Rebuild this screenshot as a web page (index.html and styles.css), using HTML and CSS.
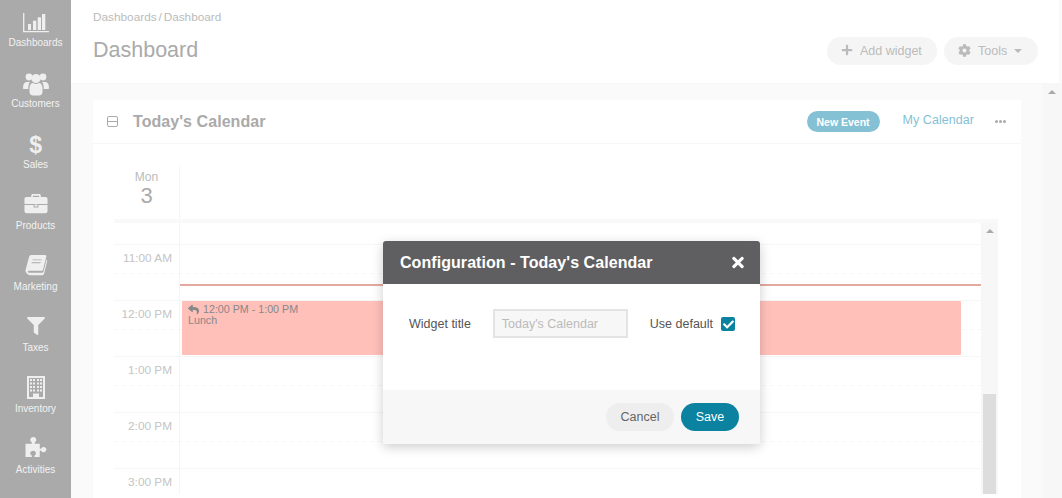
FILE: index.html
```html
<!DOCTYPE html>
<html lang="en">
<head>
<meta charset="utf-8">
<title>Dashboard</title>
<link rel="stylesheet" href="styles.css">
</head>
<body>
<nav class="sidebar">
  <a class="nav-item"><svg class="nav-icon" viewBox="0 -1 26 24"><path class="line" d="M.7 0v18.700H26"/><rect x="5" y="11" width="3" height="6"/><rect x="10" y="7.700" width="3.300" height="9.300"/><rect x="14.700" y="4.300" width="3.300" height="12.700"/><rect x="19" y="1" width="3.300" height="16"/></svg><span>Dashboards</span></a>
  <a class="nav-item"><svg class="nav-icon" viewBox="0 1 26 24"><circle cx="6" cy="5" r="3.400"/><circle cx="20" cy="5" r="3.400"/><circle cx="13" cy="6.500" r="4.600"/><path d="M0 16c0-4 1.500-6 3.500-6h3.300c-1 1.600-1.500 3.500-1.500 6v1H1c-.6 0-1-.4-1-1zM26 16c0-4-1.500-6-3.500-6h-3.300c1 1.600 1.500 3.500 1.500 6v1H25c.6 0 1-.4 1-1z"/><path d="M6.500 16.500c0-3.500 1.500-5.500 3.500-5.500 1.800 1.200 4.200 1.200 6 0 2 0 3.500 2 3.500 5.500v3.500c0 2-1.500 3.500-3.500 3.500h-6c-2 0-3.500-1.500-3.500-3.500z"/></svg><span>Customers</span></a>
  <a class="nav-item"><span class="dollar">$</span><span>Sales</span></a>
  <a class="nav-item"><svg class="nav-icon" viewBox="-1.500 1 27 25"><path d="M7 3V1.500C7 .7 7.700 0 8.500 0h7c.8 0 1.500.7 1.500 1.500V3h5c1.100 0 2 .9 2 2v5.500H0V5c0-1.100.9-2 2-2zm1.700 0h6.600V1.700H8.700zM0 11.500h9.500V14h5v-2.500H24V18c0 1.100-.9 2-2 2H2c-1.100 0-2-.9-2-2z"/><rect x="10.500" y="11" width="3" height="2"/></svg><span>Products</span></a>
  <a class="nav-item"><svg class="nav-icon" viewBox="-2.600 1 27.200 25"><path d="M6 0h14.500c1 0 1.500.8 1.300 1.700l-3.500 13.600c-.2.8-.8 1.200-1.500 1.200H4.500c-1.300 0-2 .4-2 1s.7 1 1.500 1h13.500c.6 0 1-.3 1.200-.8l3.400-13c.5.3.8.9.6 1.600l-3.300 13.100c-.2.900-1 1.600-2 1.600H4C1.600 20 0 18.500 0 16.500c0-.5.1-1 .2-1.300L3.700 2C4 .9 4.800 0 6 0zm1.500 4.500l-.3 1h9.500l.3-1zm-1 3l-.3 1h9.500l.3-1z" fill-rule="evenodd"/></svg><span>Marketing</span></a>
  <a class="nav-item"><svg class="nav-icon" viewBox="-114 0 740 683"><path d="M487.976 0H24.028C2.710 0-8.047 25.866 7.058 40.971L192 225.941V432c0 7.831 3.821 15.170 10.237 19.662l80 55.980C298.020 518.690 320 507.493 320 487.980V225.941l184.947-184.970C520.021 25.896 509.338 0 487.976 0z"/></svg><span>Taxes</span></a>
  <a class="nav-item"><svg class="nav-icon" viewBox="-4 2 26 24"><path fill-rule="evenodd" d="M0 0h18v23H0zM2 2v19h4v-3.500h6V21h4V2z"/><path d="M3 3h2v2H3zm3 0h2v2H6zm4 0h2v2h-2zm3 0h2v2h-2zM3 6.500h2v2H3zm3 0h2v2H6zm4 0h2v2h-2zm3 0h2v2h-2zM3 10h2v2H3zm3 0h2v2H6zm4 0h2v2h-2zm3 0h2v2h-2zM3 13.500h2v2H3zm3 0h2v2H6zm4 0h2v2h-2zm3 0h2v2h-2z"/></svg><span>Inventory</span></a>
  <a class="nav-item"><svg class="nav-icon" viewBox="-2.600 2 27.300 25.300"><path d="M0 7h6.500c.6-.5.3-1.200-.3-1.800C5.500 4.500 5 4 5 3c0-1.700 1.400-3 3.200-3 1.800 0 3.200 1.300 3.200 3 0 1-.5 1.500-1.200 2.200-.6.600-.9 1.300-.3 1.800H15v5c.6.600 1.300.3 1.800-.3.700-.7 1.200-1.200 2.200-1.200 1.700 0 3 1.300 3 2.700s-1.300 2.800-3 2.800c-1 0-1.500-.5-2.200-1.200-.5-.6-1.200-.9-1.800-.3V21H9.500c-.6-.6-.3-1.300.3-1.800.7-.7 1.200-1.200 1.200-2.200 0-1.500-1.300-2.500-3-2.500s-3 1-3 2.500c0 1 .5 1.500 1.200 2.200.6.500.9 1.200.3 1.800H0z"/></svg><span>Activities</span></a>
</nav>

<main class="main">
  <header class="page-head">
    <div class="head-text">
      <div class="crumbs">Dashboards / Dashboard</div>
      <h1 class="page-title">Dashboard</h1>
    </div>
    <div class="head-actions">
      <button class="pill-btn pill-add"><svg class="btn-icon" viewBox="0 0 448 512"><path d="M416 208H272V64c0-17.670-14.330-32-32-32h-32c-17.670 0-32 14.330-32 32v144H32c-17.670 0-32 14.330-32 32v32c0 17.670 14.330 32 32 32h144v144c0 17.670 14.330 32 32 32h32c17.670 0 32-14.330 32-32V304h144c17.670 0 32-14.330 32-32v-32c0-17.670-14.330-32-32-32z"/></svg>Add widget</button>
      <button class="pill-btn pill-tools"><svg class="btn-icon btn-gear" viewBox="0 0 512 512"><path d="M487.400 315.700l-42.600-24.600c4.300-23.200 4.300-47 0-70.200l42.600-24.600c4.900-2.800 7.100-8.600 5.500-14-11.100-35.600-30-67.800-54.700-94.600-3.800-4.100-10-5.100-14.800-2.300L380.800 110c-17.900-15.400-38.500-27.300-60.800-35.100V25.800c0-5.600-3.900-10.500-9.400-11.700-36.700-8.200-74.300-7.800-109.200 0-5.500 1.200-9.400 6.100-9.400 11.700V75c-22.200 7.900-42.800 19.800-60.800 35.100L88.700 85.500c-4.900-2.800-11-1.900-14.800 2.300-24.700 26.700-43.600 58.900-54.700 94.600-1.700 5.400.6 11.200 5.500 14L67.300 221c-4.300 23.200-4.300 47 0 70.200l-42.600 24.600c-4.900 2.800-7.100 8.600-5.500 14 11.100 35.600 30 67.800 54.700 94.600 3.800 4.100 10 5.100 14.800 2.300l42.600-24.600c17.900 15.400 38.500 27.300 60.800 35.100v49.200c0 5.600 3.900 10.500 9.400 11.700 36.700 8.200 74.300 7.800 109.200 0 5.500-1.200 9.400-6.100 9.400-11.700v-49.200c22.200-7.900 42.800-19.800 60.800-35.100l42.600 24.600c4.900 2.800 11 1.900 14.800-2.300 24.700-26.700 43.600-58.900 54.700-94.600 1.500-5.500-.7-11.300-5.600-14.100zM256 336c-44.100 0-80-35.900-80-80s35.900-80 80-80 80 35.900 80 80-35.900 80-80 80z"/></svg>Tools<span class="caret"></span></button>
    </div>
  </header>

  <div class="work">
    <div class="content">
      <section class="panel">
        <div class="panel-head">
          <span class="collapse"></span>
          <h2 class="panel-title">Today's Calendar</h2>
          <span class="new-event">New Event</span>
          <a class="my-cal">My Calendar</a>
          <span class="dots"><i></i><i></i><i></i></span>
        </div>
        <div class="calendar">
          <div class="day-head">
            <div class="day-cell"><span class="day-name">Mon</span><span class="day-num">3</span></div>
          </div>
          <div class="band"></div>
          <div class="cal-body">
            <div class="rows">
              <div class="row row-top"><div class="time"></div></div>
              <div class="row"><div class="time">11:00 AM</div></div>
              <div class="row"><div class="time">12:00 PM</div></div>
              <div class="row"><div class="time">1:00 PM</div></div>
              <div class="row"><div class="time">2:00 PM</div></div>
              <div class="row"><div class="time">3:00 PM</div></div>
              <div class="now-line"></div>
              <div class="event">
                <div class="event-time"><svg class="reply" viewBox="0 0 512 512"><path d="M8.309 189.836L184.313 37.851C199.719 24.546 224 35.347 224 56.015v80.053c160.629 1.839 288 34.032 288 186.258 0 61.441-39.581 122.309-83.333 154.132-13.653 9.931-33.111-2.533-28.077-18.631 45.344-145.012-21.507-183.510-176.590-185.742V360c0 20.700-24.300 31.453-39.687 18.164l-176.004-152c-11.071-9.562-11.086-26.753 0-36.328z"/></svg>12:00 PM - 1:00 PM</div>
                <div>Lunch</div>
              </div>
            </div>
            <div class="cal-scroll"><span class="arrow"></span><span class="thumb"></span></div>
          </div>
        </div>
      </section>
    </div>
    <div class="page-scroll"><span class="arrow"></span></div>
  </div>
</main>

<div class="modal">
  <div class="modal-head">
    <span>Configuration - Today's Calendar</span>
    <svg class="close" viewBox="0 0 352 512"><path d="M242.720 256l100.070-100.070c12.280-12.280 12.280-32.190 0-44.480l-22.240-22.240c-12.280-12.280-32.190-12.280-44.480 0L176 189.280 75.930 89.210c-12.280-12.280-32.190-12.280-44.480 0L9.210 111.450c-12.280 12.280-12.280 32.190 0 44.480L109.280 256 9.210 356.070c-12.280 12.280-12.280 32.190 0 44.480l22.240 22.240c12.280 12.280 32.200 12.280 44.480 0L176 322.720l100.070 100.070c12.280 12.280 32.200 12.280 44.480 0l22.240-22.240c12.280-12.280 12.280-32.190 0-44.480L242.720 256z"/></svg>
  </div>
  <div class="modal-body">
    <label class="field-label">Widget title</label>
    <div class="field-input">Today's Calendar</div>
    <label class="field-label field-default">Use default</label>
    <span class="check"><svg viewBox="0 0 512 512"><path d="M173.898 439.404l-166.400-166.400c-9.997-9.997-9.997-26.206 0-36.204l36.203-36.204c9.997-9.998 26.207-9.998 36.204 0L192 312.690 432.095 72.596c9.997-9.997 26.207-9.997 36.204 0l36.203 36.204c9.997 9.997 9.997 26.206 0 36.204l-294.400 294.401c-9.998 9.997-26.207 9.997-36.204-.001z"/></svg></span>
  </div>
  <div class="modal-foot">
    <button class="foot-btn cancel">Cancel</button>
    <button class="foot-btn save">Save</button>
  </div>
</div>
</body>
</html>
```
FILE: styles.css
```css
* { box-sizing: border-box; }
html, body { margin: 0; height: 498px; overflow: hidden; }
body { display: flex; font-family: "Liberation Sans", Arial, sans-serif; font-size: 12.5px; background: #fafafa; color: #999; }

.sidebar { width: 71px; flex: none; background: #aaa; display: flex; flex-direction: column; padding-top: 12px; color: #f2f2f2; }
.nav-item { height: 61px; flex: none; display: flex; flex-direction: column; align-items: center; font-size: 10px; line-height: 13px; }
.nav-item span:last-child { display: block; }
.nav-icon { height: 24px; width: 26px; fill: #efefef; display: block; overflow: visible; }
.nav-icon .line { fill: none; stroke: #efefef; stroke-width: 1.300; }
.nav-item .dollar { font-size: 20px; line-height: 23px; height: 24px; font-weight: 700; color: #efefef; transform: translateY(-3px) scale(1.150, 1.200); transform-origin: center top; }

.main { flex: 1; min-width: 0; display: flex; flex-direction: column; }
.page-head { height: 84px; flex: none; background: #fff; border-bottom: 1px solid #f6f6f6; margin-right: 3px; padding: 10px 21px 0 22px; display: flex; justify-content: space-between; }
.crumbs { font-size: 11.800px; line-height: 14px; color: #bbb; word-spacing: -1.400px; }
.page-title { margin: 14px 0 0; font-size: 21.500px; line-height: 25px; font-weight: 400; color: #aaa; }
.head-actions { display: flex; gap: 7px; padding-top: 27px; }
.pill-btn { height: 28px; border: 0; border-radius: 14px; background: #f5f5f5; color: #bbb; font: inherit; display: flex; align-items: center; padding: 0; }
.pill-add { width: 110px; padding-left: 14px; }
.pill-tools { width: 94px; padding-left: 14px; }
.btn-icon { width: 12px; height: 12px; fill: #bbb; margin: -2px 7px 0 0; flex: none; }
.btn-gear { width: 13px; height: 13px; }
.caret { width: 0; height: 0; border-left: 4px solid transparent; border-right: 4px solid transparent; border-top: 4px solid #bbb; margin-left: 7px; }

.work { flex: 1; min-height: 0; display: flex; }
.content { flex: 1; min-width: 0; padding: 16px 21px 0 22px; overflow: hidden; }
.page-scroll { width: 20px; flex: none; background: #f7f7f7; display: flex; justify-content: center; padding-top: 6px; }
.arrow { width: 0; height: 0; border-left: 4px solid transparent; border-right: 4px solid transparent; border-bottom: 4px solid #aaa; display: block; }

.panel { background: #fff; height: 400px; }
.panel-head { height: 44px; border-bottom: 1px solid #f7f7f7; display: flex; align-items: center; padding: 0 15px 0 14px; }
.collapse { width: 11px; height: 11px; border: 1px solid #aaa; border-radius: 2px; flex: none; margin-right: 15px; background: linear-gradient(#aaa, #aaa) center / 100% 1px no-repeat; }
.panel-title { margin: 0; font-size: 16px; line-height: 20px; font-weight: 700; color: #aaa; flex: 1; letter-spacing: .06px; }
.new-event { width: 73px; height: 21px; border-radius: 11px; background: #85c1d4; color: #fff; font-size: 10.500px; font-weight: 700; display: flex; align-items: center; justify-content: center; }
.my-cal { margin-left: 23px; color: #85c1d4; position: relative; top: -2px; letter-spacing: .05px; }
.dots { display: flex; gap: 1px; margin-left: 21px; }
.dots i { width: 3px; height: 3px; background: #aaa; border-radius: 50%; display: block; }

.calendar { margin: 0 23px 0 21px; }
.day-head { height: 75px; padding-top: 21px; }
.day-cell { width: 66px; height: 54px; border-right: 1px solid #f5f5f5; display: flex; flex-direction: column; align-items: center; }
.day-name { font-size: 12px; line-height: 14px; color: #bbb; margin-top: 5px; }
.day-num { font-size: 22px; line-height: 24px; color: #aaa; }
.band { height: 4px; background: #f9f9f9; }
.cal-body { display: flex; height: 271px; }
.rows { flex: 1; min-width: 0; position: relative; overflow: hidden; }
.row { height: 56px; border-top: 1px solid #f6f6f6; background: linear-gradient(90deg, #f6f6f6 50%, transparent 50%) 0 28px / 8px 1px repeat-x; }
.row-top { height: 21px; border-top: 0; background: none; }
.time { width: 66px; height: 100%; border-right: 1px solid #f5f5f5; text-align: right; padding: 6px 7px 0 0; font-size: 11.800px; line-height: 14px; color: #c4c4c4; }
.now-line { position: absolute; left: 66px; right: 0; top: 61px; height: 2px; background: #e5a89e; }
.event { position: absolute; left: 68px; width: 779px; top: 78px; height: 54px; background: #ffc0ba; border-radius: 1px; padding: 3px 6px; font-size: 10.700px; line-height: 11px; color: #888; }
.event-time { display: flex; align-items: center; }
.reply { width: 11px; height: 11px; fill: #888; margin-right: 4px; }
.cal-scroll { width: 17px; flex: none; background: #f7f7f7; display: flex; flex-direction: column; align-items: center; padding-top: 6px; }
.thumb { width: 13px; height: 100px; background: #ddd; margin-top: 161px; }

.modal { position: absolute; left: 383px; top: 241px; width: 377px; height: 203px; border-radius: 3px; overflow: hidden; background: #fff; box-shadow: 0 3px 12px rgba(0, 0, 0, .2); display: flex; flex-direction: column; }
.modal-head { height: 43px; flex: none; background: #5f5f61; color: #fff; font-size: 16px; font-weight: 700; letter-spacing: .06px; display: flex; align-items: center; justify-content: space-between; padding: 0 16px 0 17px; }
.close { width: 12px; height: 17px; fill: #fff; }
.modal-body { flex: 1; display: flex; align-items: flex-start; padding: 25px 0 0 26px; color: #555; }
.field-label { line-height: 31px; }
.field-input { width: 135px; height: 29px; margin-left: 22px; border: 2px solid #e4e4e4; background: #f7f7f7; color: #bbb; line-height: 27px; padding-left: 7px; }
.field-default { margin-left: 22px; }
.check { width: 14px; height: 14px; margin: 8px 0 0 8px; border-radius: 2px; background: #0a82a0; display: flex; align-items: center; justify-content: center; }
.check svg { width: 11px; height: 11px; fill: #fff; }
.modal-foot { height: 54px; flex: none; background: #f7f7f7; display: flex; justify-content: flex-end; align-items: center; gap: 7px; padding: 0 21px 0 0; }
.foot-btn { height: 28px; border: 0; border-radius: 14px; font: inherit; padding: 0; }
.cancel { width: 68px; background: #eee; color: #666; }
.save { width: 58px; background: #0a82a0; color: #fff; }
```
